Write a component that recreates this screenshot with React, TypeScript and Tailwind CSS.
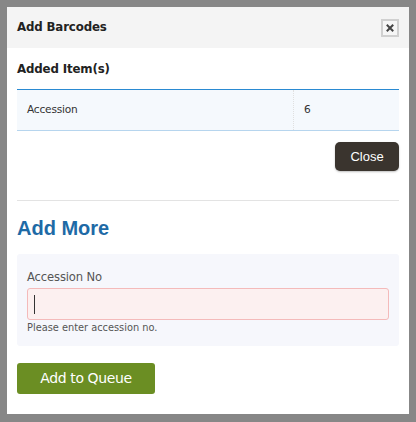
const App = () => {
    return (
        <div className="w-[416px] h-[422px] bg-[#878787] pt-[7px] px-[7px] font-['DejaVu_Sans',sans-serif]">
            <div className="w-[402px] h-[407px] bg-white flex flex-col">
                {/* header */}
                <div className="h-[41px] bg-[#f4f4f4] pl-[10px] pr-[10px] flex items-center justify-between">
                    <h2 className="text-[11.8px] font-bold text-[#222] tracking-[-0.15px]">Add Barcodes</h2>
                    <button className="w-[18px] h-[18px] border-2 border-[#d0d0d0] bg-[#f6f6f6] flex items-center justify-center">
                        <svg width="8" height="8" viewBox="0 0 8 8">
                            <path d="M1.5 1.5 L6.5 6.5 M6.5 1.5 L1.5 6.5" stroke="#444" strokeWidth="2" strokeLinecap="square" />
                        </svg>
                    </button>
                </div>

                <div className="px-[10px] flex flex-col">
                    <div className="h-[41px] pt-[3px] flex items-center">
                        <h3 className="text-[11.8px] font-bold text-[#222] tracking-[-0.15px]">Added Item(s)</h3>
                    </div>

                    {/* table */}
                    <div className="border-t-[1.5px] border-[#2a8ad2]">
                        <div className="h-[41px] bg-[#f5f9fd] border-b border-[#b6d5ee] flex text-[10.6px] text-[#333] tracking-[-0.2px]">
                            <div className="w-[277px] pl-[10px] flex items-center border-r border-dotted border-[#e0e0e0]">Accession</div>
                            <div className="flex-1 pl-[10px] flex items-center">6</div>
                        </div>
                    </div>

                    <div className="flex justify-end mt-[11px]">
                        <button className="w-[64px] h-[29px] rounded-[5px] bg-[#3a342e] text-white text-[13px] font-['Liberation_Sans',sans-serif] shadow-[0_1px_2px_rgba(0,0,0,0.25)]">
                            Close
                        </button>
                    </div>

                    <div className="mt-[29px] h-px bg-[#e3e3e3]" />

                    <h2 className="mt-[13px] h-[28px] leading-[28px] text-[20px] font-bold text-[#1e6aa6] font-['Liberation_Sans',sans-serif]">
                        Add More
                    </h2>

                    {/* form panel */}
                    <div className="mt-[12px] bg-[#f6f7fc] rounded-[3px] px-[10px] pt-[15px] pb-[12px]">
                        <label className="block h-[16px] leading-[16px] text-[11.6px] text-[#555] tracking-[-0.15px]">Accession No</label>
                        <div className="mt-[3px] h-[32px] border border-[#f4baba] bg-[#fcf0f0] rounded-[3px] flex items-center pl-[6px]">
                            <span className="w-px h-[19px] bg-[#333]" />
                        </div>
                        <p className="mt-[2px] h-[12px] leading-[12px] text-[9.8px] text-[#555]">Please enter accession no.</p>
                    </div>

                    <button className="mt-[17px] w-[138px] h-[31px] rounded-[3px] bg-[#6b8e23] text-white text-[14px] tracking-[-0.4px]">
                        Add to Queue
                    </button>
                </div>
            </div>
        </div>
    );
};

export default App;
